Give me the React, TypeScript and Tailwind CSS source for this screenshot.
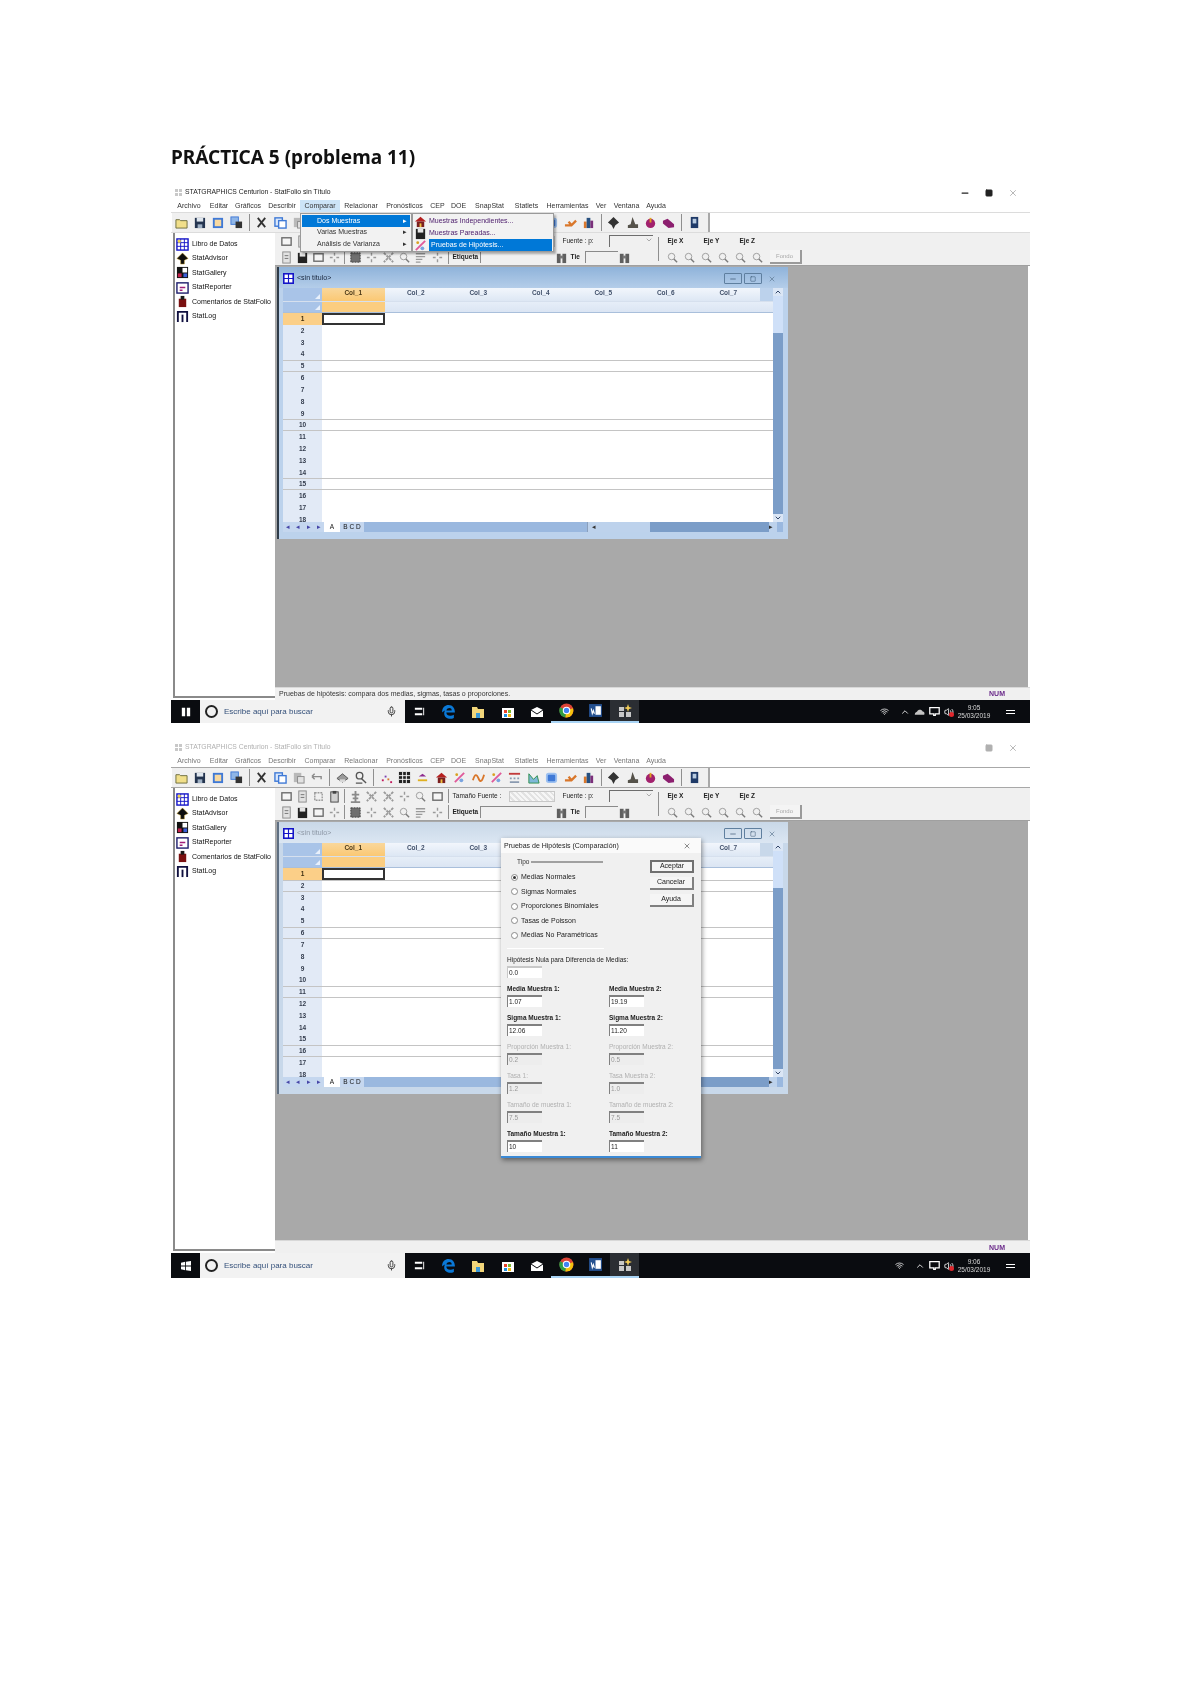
import { ChevronDown, ChevronUp, Mic, Minus, Square, Volume2, Wifi, X } from "lucide-react";
import type { ReactNode } from "react";

const menus = [
  { label: "Archivo", width: "w-[34px]" },
  { label: "Editar", width: "w-[26px]" },
  { label: "Gráficos", width: "w-[32px]" },
  { label: "Describir", width: "w-[36px]" },
  { label: "Comparar", width: "w-[40px]" },
  { label: "Relacionar", width: "w-[42px]" },
  { label: "Pronósticos", width: "w-[45px]" },
  { label: "CEP", width: "w-[21px]" },
  { label: "DOE", width: "w-[21px]" },
  { label: "SnapStat", width: "w-[41px]" },
  { label: "Statlets", width: "w-[33px]" },
  { label: "Herramientas", width: "w-[49px]" },
  { label: "Ver", width: "w-[18px]" },
  { label: "Ventana", width: "w-[33px]" },
  { label: "Ayuda", width: "w-[26px]" },
];

const sidebarItems = [
  { label: "Libro de Datos", icon: "book" },
  { label: "StatAdvisor", icon: "advisor" },
  { label: "StatGallery", icon: "gallery" },
  { label: "StatReporter", icon: "reporter" },
  { label: "Comentarios de StatFolio", icon: "comments" },
  { label: "StatLog", icon: "log" },
];

function ToolIcon({ kind }: { kind: string }) {
  const shapes: Record<string, ReactNode> = {
    folder: <path d="M1 4h4l1 1h7v8H1z" fill="#f1df8a" stroke="#6b6b3a" />,
    save: (
      <>
        <rect x="2" y="2" width="11" height="11" fill="#24344f" />
        <rect x="4" y="2" width="7" height="4" fill="#dfe6ee" />
        <rect x="5" y="9" width="5" height="4" fill="#9fb0c4" />
      </>
    ),
    frame: <rect x="3" y="3" width="9" height="9" fill="#f8d9a0" stroke="#3f79d6" strokeWidth="2" />,
    multi: (
      <>
        <rect x="1" y="1" width="8" height="8" fill="#8fb6e8" stroke="#3f79d6" />
        <rect x="6" y="6" width="7" height="7" fill="#333333" />
      </>
    ),
    cut: <path d="M3 2l8 10M11 2L3 12" stroke="#333333" strokeWidth="2" fill="none" />,
    copy: (
      <>
        <rect x="1" y="2" width="8" height="9" fill="#dbe8fb" stroke="#3f79d6" strokeWidth="1.5" />
        <rect x="5" y="5" width="8" height="8" fill="#ffffff" stroke="#3f79d6" strokeWidth="1.5" />
      </>
    ),
    paste: (
      <>
        <rect x="2" y="2" width="8" height="10" fill="#b9b9b9" />
        <rect x="6" y="6" width="7" height="7" fill="#e2e2e2" stroke="#8a8a8a" />
      </>
    ),
    undo: <path d="M2 6h10v3M2 6l3-3M2 6l3 3" stroke="#8a8a8a" strokeWidth="1.5" fill="none" />,
    print: (
      <>
        <path d="M1 8l6-5 6 5-6 4z" fill="#9a9a9a" stroke="#555555" />
        <rect x="4" y="9" width="6" height="3" fill="#d8d8d8" />
      </>
    ),
    preview: (
      <>
        <circle cx="6" cy="5" r="3.5" fill="none" stroke="#555555" strokeWidth="1.5" />
        <path d="M8 8l5 5M2 13h7" stroke="#555555" strokeWidth="1.5" />
      </>
    ),
    scatter: (
      <>
        <rect x="2" y="9" width="2" height="2" fill="#c2185b" />
        <rect x="5" y="5" width="2" height="2" fill="#7b3fb0" />
        <rect x="8" y="8" width="2" height="2" fill="#d9772b" />
        <rect x="11" y="11" width="2" height="2" fill="#c2185b" />
      </>
    ),
    grid: (
      <>
        <rect x="1" y="1" width="12" height="12" fill="#222222" />
        <path d="M5 1v12M9 1v12M1 5h12M1 9h12" stroke="#ffffff" />
      </>
    ),
    hat: (
      <>
        <path d="M3 6l4-3 4 3z" fill="#8e2a8e" />
        <rect x="2" y="9" width="10" height="2" fill="#e0b020" />
      </>
    ),
    house: (
      <>
        <path d="M7 2l6 5H1z" fill="#b52020" />
        <rect x="3" y="7" width="8" height="6" fill="#7a1f1f" />
        <rect x="6" y="9" width="2" height="4" fill="#f0c040" />
      </>
    ),
    wave: <path d="M1 10c2-7 4-7 6-2s4 3 6-4" stroke="#d9772b" strokeWidth="2" fill="none" />,
    mixed: (
      <>
        <path d="M2 12L12 2" stroke="#e05a9a" strokeWidth="2" />
        <circle cx="9" cy="10" r="2" fill="#7aa4e0" />
        <circle cx="4" cy="4" r="1.5" fill="#d9a020" />
      </>
    ),
    dash: (
      <>
        <path d="M1 3h12" stroke="#c23a3a" strokeWidth="2" />
        <path d="M2 8h2M6 8h2M10 8h2M2 12h10" stroke="#8a9ab0" strokeWidth="2" />
      </>
    ),
    chart: <path d="M2 13V3l5 6 4-4 2 8z" fill="#7fb8d8" stroke="#2f8f4e" />,
    blue: <rect x="2" y="3" width="10" height="9" rx="2" fill="#3f79d6" stroke="#9cc0f0" strokeWidth="2" />,
    arrow: <path d="M1 10h7l5-5M5 6l3 4" stroke="#d9772b" strokeWidth="2.5" fill="none" />,
    tower: (
      <>
        <rect x="2" y="6" width="3" height="7" fill="#d9772b" />
        <rect x="5" y="2" width="4" height="11" fill="#27507f" />
        <rect x="9" y="5" width="3" height="8" fill="#7a2f7a" />
      </>
    ),
    ball: <path d="M7 1l6 6-4 3-2 4-2-4-4-3z" fill="#333333" />,
    wizard: <path d="M7 1l3 8h3v4H2v-3l3-1z" fill="#55524a" />,
    apple: (
      <>
        <circle cx="7" cy="8" r="5" fill="#a2216d" />
        <path d="M7 2v5" stroke="#e0a020" strokeWidth="2" />
      </>
    ),
    bookmark: <path d="M1 5l5-2 7 6v3l-6 1-6-5z" fill="#8c1f6f" />,
    doc: (
      <>
        <rect x="3" y="1" width="8" height="12" fill="#1f3a68" />
        <rect x="5" y="3" width="4" height="5" fill="#b8cbe0" />
      </>
    ),
    grayFrame: <rect x="2" y="3" width="10" height="8" fill="#f5f5f5" stroke="#6d6d6d" strokeWidth="1.5" />,
    grayDoc: (
      <>
        <rect x="3" y="1" width="8" height="12" fill="#e2e2e2" stroke="#8a8a8a" />
        <path d="M5 5h4M5 8h4" stroke="#707070" />
      </>
    ),
    grayDots: <rect x="3" y="3" width="8" height="8" fill="none" stroke="#9a9a9a" strokeWidth="1.5" strokeDasharray="2 1" />,
    clip: (
      <>
        <rect x="3" y="2" width="8" height="11" fill="#d0d0d0" stroke="#444444" />
        <rect x="5" y="1" width="4" height="3" fill="#444444" />
      </>
    ),
    grayTree: <path d="M7 1v12M3 5h8M2 13h10M4 9h6" stroke="#8a8a8a" strokeWidth="2" />,
    graySpark: <path d="M2 7h3M9 7h3M7 2v3M7 9v3" stroke="#9a9a9a" strokeWidth="1.5" />,
    grayCross: <path d="M2 2l10 10M12 2L2 12" stroke="#9a9a9a" strokeWidth="2" strokeDasharray="3 1" />,
    floppyDark: (
      <>
        <rect x="2" y="2" width="10" height="11" fill="#222222" />
        <rect x="4" y="2" width="6" height="4" fill="#e5e5e5" />
      </>
    ),
    hatch: <rect x="2" y="2" width="10" height="10" fill="#6f6f6f" stroke="#3d3d3d" strokeDasharray="2 1" />,
    lines: <path d="M2 3h10M2 6h10M2 9h7M2 12h5" stroke="#9a9a9a" strokeWidth="1.5" />,
    zoomGray: (
      <>
        <circle cx="6" cy="6" r="3.5" fill="none" stroke="#9a9a9a" />
        <path d="M8.5 8.5L12 12" stroke="#7b7b7b" strokeWidth="1.5" />
      </>
    ),
    binoculars: (
      <>
        <rect x="2" y="3" width="4" height="10" fill="#5f5f5f" />
        <rect x="8" y="3" width="4" height="10" fill="#5f5f5f" />
        <rect x="5" y="5" width="4" height="3" fill="#777777" />
      </>
    ),
  };
  return (
    <svg viewBox="0 0 14 14" className="h-[13px] w-[13px] shrink-0">
      {shapes[kind]}
    </svg>
  );
}

function Separator({ height = "h-[17px]", margin = "mx-[3px]" }: { height?: string; margin?: string }) {
  return <div className={`${height} ${margin} w-px shrink-0 bg-[#8f8f8f]`} />;
}

function MainToolbar({ active }: { active: boolean }) {
  const first = ["folder", "save", "frame", "multi"];
  const second = ["cut", "copy", "paste", "undo"];
  const third = ["print", "preview"];
  const fourth = ["scatter", "grid", "hat", "house", "mixed", "wave", "mixed", "dash", "chart", "blue", "arrow", "tower"];
  const fifth = ["ball", "wizard", "apple", "bookmark"];
  const slot = (kind: string, index: number) => (
    <div className="flex w-[18.4px] shrink-0 justify-center" key={`${kind}-${index}`}>
      <ToolIcon kind={kind} />
    </div>
  );
  return (
    <div
      className={`flex h-[21px] items-center border-y bg-white pl-[1px] ${
        active ? "border-[#dcdcdc]" : "border-[#a8a8a8]"
      }`}
    >
      <div className="flex h-full items-center bg-[#f0f0f0] pr-[4px]">
        {first.map(slot)}
        <Separator />
        {second.map(slot)}
        <Separator />
        {third.map(slot)}
        <Separator />
        {fourth.map(slot)}
        <Separator />
        {fifth.map(slot)}
        <Separator />
        {slot("doc", 0)}
      </div>
      <div className="h-full w-[2px] bg-[#a8a8a8]" />
    </div>
  );
}

function FormatToolbar() {
  const rowA = ["grayFrame", "grayDoc", "grayDots", "clip"];
  const rowA2 = ["grayTree", "grayCross", "grayCross", "graySpark", "zoomGray", "grayFrame"];
  const rowB = ["grayDoc", "floppyDark", "grayFrame", "graySpark"];
  const rowB2 = ["hatch", "graySpark", "grayCross", "zoomGray", "lines", "graySpark"];
  const slot = (kind: string, index: number) => (
    <div className="flex w-[15.8px] shrink-0 justify-center" key={`${kind}-${index}`}>
      <ToolIcon kind={kind} />
    </div>
  );
  const wideSlot = (kind: string, index: number) => (
    <div className="flex w-[16.4px] shrink-0 justify-center" key={`${kind}-${index}`}>
      <ToolIcon kind={kind} />
    </div>
  );
  return (
    <div className="flex h-[33px] shrink-0 border-b border-[#a0a0a0] bg-[#f0f0f0] pl-[4px] text-[6.5px] text-[#222]">
      <div className="flex flex-col justify-center gap-[1px]">
        <div className="flex h-[15px] items-center">
          {rowA.map(slot)}
          <Separator height="h-[14px]" margin="mx-[2px]" />
          {rowA2.map(wideSlot)}
          <Separator height="h-[14px]" margin="mx-[2px]" />
          <span className="w-[58px] pl-[2px]">Tamaño Fuente :</span>
          <div className="h-[11px] w-[46px] border border-[#c8c8c8] bg-[repeating-linear-gradient(45deg,#f6f6f6_0_2px,#e2e2e2_2px_4px)]" />
          <span className="w-[54px] pl-[8px]">Fuente : p:</span>
          <div className="flex h-[12px] w-[44px] justify-end border-t border-l border-[#6e6e6e] bg-[#f0f0f0]">
            <ChevronDown size={8} className="text-[#888]" />
          </div>
        </div>
        <div className="flex h-[15px] items-center">
          {rowB.map(slot)}
          <Separator height="h-[14px]" margin="mx-[2px]" />
          {rowB2.map(wideSlot)}
          <Separator height="h-[14px]" margin="mx-[2px]" />
          <span className="w-[29px] pl-[2px] font-bold">Etiqueta</span>
          <div className="h-[12px] w-[72px] border-t border-l border-[#8a8a8a]" />
          <div className="flex w-[19px] justify-center">
            <ToolIcon kind="binoculars" />
          </div>
          <span className="w-[14px] font-bold">Tie</span>
          <div className="h-[12px] w-[33px] border-t border-l border-[#8a8a8a]" />
          <div className="flex w-[14px] justify-center">
            <ToolIcon kind="binoculars" />
          </div>
        </div>
      </div>
      <div className="mx-[5px] my-[4px] w-px bg-[#8f8f8f]" />
      <div className="flex flex-col justify-center gap-[1px]">
        <div className="flex h-[15px] items-center font-bold">
          <span className="w-[36px] pl-[4px]">Eje X</span>
          <span className="w-[36px] pl-[4px]">Eje Y</span>
          <span className="w-[30px] pl-[4px]">Eje Z</span>
        </div>
        <div className="flex h-[15px] items-center">
          {["zoomGray", "zoomGray", "zoomGray", "zoomGray", "zoomGray", "zoomGray"].map((kind, index) => (
            <div className="flex w-[17px] justify-center" key={index}>
              <ToolIcon kind={kind} />
            </div>
          ))}
          <div className="ml-[4px] flex h-[14px] w-[32px] items-center justify-center border-r-2 border-b-2 border-[#9a9a9a] bg-[#f4f4f4] text-[6px] text-[#aaa]">
            Fondo
          </div>
        </div>
      </div>
    </div>
  );
}

function SidebarIcon({ kind }: { kind: string }) {
  const shapes: Record<string, ReactNode> = {
    book: (
      <>
        <rect x="1" y="1" width="12" height="12" fill="#ffffff" stroke="#1414c8" strokeWidth="1.5" />
        <path d="M1 5h12M1 9h12M5 1v12M9 1v12" stroke="#1414c8" />
        <rect x="2" y="2" width="3" height="3" fill="#f2d64b" />
      </>
    ),
    advisor: <path d="M7 1l6 6-4 2v4H5V9L1 7z" fill="#0d0d0d" stroke="#c9a020" strokeWidth="0.5" />,
    gallery: (
      <>
        <rect x="1" y="1" width="12" height="12" fill="#111111" />
        <rect x="7" y="2" width="5" height="5" fill="#ffffff" />
        <rect x="2" y="8" width="4" height="4" fill="#c21f4a" />
        <rect x="8" y="8" width="4" height="4" fill="#3b5fd8" />
      </>
    ),
    reporter: (
      <>
        <rect x="1" y="2" width="12" height="11" fill="#ffffff" stroke="#1d1d6d" strokeWidth="1.5" />
        <path d="M4 7h6M4 10h3" stroke="#a01f7a" strokeWidth="1.5" />
      </>
    ),
    comments: (
      <>
        <rect x="3" y="4" width="8" height="9" fill="#7a1010" />
        <rect x="5" y="1" width="4" height="4" fill="#1a1a1a" />
      </>
    ),
    log: (
      <>
        <path d="M2 13V2h10v11" fill="none" stroke="#101040" strokeWidth="2" />
        <rect x="6" y="5" width="2" height="8" fill="#101040" />
      </>
    ),
  };
  return (
    <svg viewBox="0 0 14 14" className="h-[13px] w-[13px] shrink-0">
      {shapes[kind]}
    </svg>
  );
}

function Sidebar() {
  return (
    <div className="flex h-full w-[102px] shrink-0 flex-col border-b-2 border-l-2 border-[#8a8a8a] bg-white pt-[4px] pl-[1px]">
      {sidebarItems.map((item) => (
        <div className="flex h-[14.4px] items-center gap-[3px] text-[7px] text-[#111]" key={item.label}>
          <SidebarIcon kind={item.icon} />
          <span className="whitespace-nowrap">{item.label}</span>
        </div>
      ))}
    </div>
  );
}

function CornerCell() {
  return (
    <div className="flex w-[39px] shrink-0 items-end justify-end bg-[#a9c4e8] pr-[2px] pb-[2px]">
      <div className="h-0 w-0 border-b-[5px] border-l-[5px] border-b-[#e8f0fb] border-l-transparent" />
    </div>
  );
}

function DataWindow({ active, linedRows }: { active: boolean; linedRows: number[] }) {
  // the dialog covers Col_4 and Col_5 in the second capture
  const columns = active
    ? ["Col_1", "Col_2", "Col_3", "Col_4", "Col_5", "Col_6", "Col_7"]
    : ["Col_1", "Col_2", "Col_3", "", "", "", "Col_7"];
  const rows = Array.from({ length: 18 }, (_, i) => i + 1);
  return (
    <div
      className={`flex h-[272px] w-[511px] flex-col border-l-2 ${
        active ? "border-[#2e3b48] bg-[#bcd2ec]" : "border-[#5f6f82] bg-[#c8d8ea]"
      }`}
    >
      <div
        className={`flex h-[21px] shrink-0 items-center gap-[2px] pt-[2px] pl-[4px] text-[7px] ${
          active
            ? "bg-gradient-to-b from-[#8fb3da] to-[#b4cde9] text-[#16233a]"
            : "bg-gradient-to-b from-[#c9d8e8] to-[#dbe6f2] text-[#8d97a5]"
        }`}
      >
        <svg viewBox="0 0 14 14" className="h-[11px] w-[11px]">
          <rect x="1" y="1" width="12" height="12" fill="#ffffff" stroke="#1414c8" strokeWidth="2" />
          <path d="M1 7h12M7 1v12" stroke="#1414c8" strokeWidth="1.5" />
        </svg>
        <span className="ml-[1px]">&lt;sin título&gt;</span>
        <div className="mr-[8px] ml-auto flex items-center gap-[2px]">
          <div className="flex h-[11px] w-[18px] items-center justify-center rounded-[1px] border border-[#5f7f9f] text-[#35506d]">
            <Minus size={8} />
          </div>
          <div className="flex h-[11px] w-[18px] items-center justify-center rounded-[1px] border border-[#5f7f9f] text-[#35506d]">
            <Square size={6} />
          </div>
          <div className="flex h-[11px] w-[16px] items-center justify-center text-[#5b7590]">
            <X size={8} />
          </div>
        </div>
      </div>
      <div className="flex min-h-0 flex-1 flex-col pr-[5px] pl-[4px]">
        <div className="flex min-h-0 flex-1">
          <div className="flex min-w-0 flex-1 flex-col">
            <div className="flex h-[13px] shrink-0">
              <CornerCell />
              {columns.map((col, index) => (
                <div
                  className={`flex w-[62.5px] items-center justify-center pb-[3px] text-[6.5px] font-bold ${
                    index === 0
                      ? "bg-gradient-to-b from-[#f9d79b] to-[#fbc873] text-[#4d3a18]"
                      : "bg-gradient-to-b from-[#f2f6fc] to-[#dde7f4] text-[#41506a]"
                  }`}
                  key={index}
                >
                  {col}
                </div>
              ))}
            </div>
            <div className="flex h-[12px] shrink-0 border-t border-b border-t-[#d6e0ee] border-b-[#a9bfdb]">
              <CornerCell />
              <div className="w-[62.5px] bg-[#fbcd80]" />
              <div className="flex-1 bg-gradient-to-b from-[#e6eef8] to-[#dbe5f3]" />
            </div>
            <div className="min-h-0 flex-1 overflow-hidden bg-white">
              {rows.map((row) => (
                <div
                  className={`flex h-[11.82px] ${linedRows.includes(row) ? "border-y border-[#c4c4c4]" : ""}`}
                  key={row}
                >
                  <div
                    className={`flex w-[39px] shrink-0 items-center justify-center text-[6.5px] font-bold ${
                      row === 1 ? "bg-[#fbcf88] text-[#3d2f12]" : "bg-[#e2eaf6] text-[#333c4d]"
                    }`}
                  >
                    {row}
                  </div>
                  <div className={`w-[62.5px] shrink-0 ${row === 1 ? "border-2 border-[#333333] bg-white" : ""}`} />
                </div>
              ))}
            </div>
          </div>
          <div className="flex w-[10px] shrink-0 flex-col bg-[#7b9dc8]">
            <div className="flex h-[8px] items-center justify-center bg-[#dbe6f5] text-[#34486a]">
              <ChevronUp size={8} strokeWidth={3} />
            </div>
            <div className="h-[37px] bg-[#cfe0f8]" />
            <div className="flex-1" />
            <div className="flex h-[8px] items-center justify-center bg-[#dbe6f5] text-[#34486a]">
              <ChevronDown size={8} strokeWidth={3} />
            </div>
          </div>
        </div>
        <div className="flex h-[10px] shrink-0 items-center bg-[#9ab8df] pr-[6px] text-[6.5px] text-[#4646a8]">
          <div className="flex w-[41px] justify-around bg-[#c5d7ef]">
            <span>◂</span>
            <span>◂</span>
            <span>▸</span>
            <span>▸</span>
          </div>
          <div className="flex w-[16px] justify-center bg-white text-[#111]">A</div>
          <div className="flex w-[24px] justify-center bg-[#c5d7ef] text-[#111]">B C D</div>
          <div className="ml-auto flex h-full w-[190px] items-center border-l border-[#8ba0bd]">
            <div className="flex h-full w-[62px] items-center bg-[#bdd2ec] pl-[4px] text-[#333]">◂</div>
            <div className="h-full flex-1 bg-[#7b9dc8]" />
            <div className="h-full w-[8px] bg-[#bdd2ec] text-[#333]">▸</div>
          </div>
        </div>
      </div>
      <div className="h-[7px] shrink-0" />
    </div>
  );
}

function ComparePopup() {
  return (
    <div className="absolute top-[28px] left-[129px] flex h-[39px] text-[7px] shadow-[2px_2px_2px_rgba(0,0,0,0.3)]">
      <div className="flex w-[112px] flex-col border border-[#9a9a9a] bg-[#f2f2f2] p-[1px]">
        <div className="flex h-[12px] items-center bg-[#0078d7] pr-[3px] pl-[15px] text-white">
          Dos Muestras<span className="ml-auto">▸</span>
        </div>
        <div className="flex h-[12px] items-center pr-[3px] pl-[15px] text-[#333]">
          Varias Muestras<span className="ml-auto">▸</span>
        </div>
        <div className="flex h-[12px] items-center pr-[3px] pl-[15px] text-[#333]">
          Análisis de Varianza<span className="ml-auto">▸</span>
        </div>
      </div>
      <div className="flex w-[142px] flex-col border border-[#9a9a9a] bg-[#f2f2f2] p-[1px]">
        <div className="flex h-[12px] items-center gap-[2px] text-[#4a1a6a]">
          <ToolIcon kind="house" />
          Muestras Independientes...
        </div>
        <div className="flex h-[12px] items-center gap-[2px] text-[#4a1a6a]">
          <ToolIcon kind="floppyDark" />
          Muestras Pareadas...
        </div>
        <div className="flex h-[12px] items-center gap-[2px] text-white">
          <ToolIcon kind="mixed" />
          <div className="flex h-full flex-1 items-center bg-[#0078d7] pl-[2px]">Pruebas de Hipótesis...</div>
        </div>
      </div>
    </div>
  );
}

function Field({ label, value, enabled }: { label: string; value: string; enabled: boolean }) {
  return (
    <div className="flex h-[29px] flex-col">
      <span
        className={`h-[13px] whitespace-nowrap pt-[2px] text-[6.5px] ${
          enabled ? "font-bold text-[#222]" : "text-[#b0b0b0]"
        }`}
      >
        {label}
      </span>
      <div
        className={`flex h-[12px] w-[35px] items-center border-t-2 border-l border-[#808080] pl-[1px] text-[6.5px] ${
          enabled ? "bg-white text-[#222]" : "bg-[#ededed] text-[#999]"
        }`}
      >
        {value}
      </div>
    </div>
  );
}

function HypothesisDialog() {
  const options = ["Medias Normales", "Sigmas Normales", "Proporciones Binomiales", "Tasas de Poisson", "Medias No Paramétricas"];
  const fields = [
    { left: "Media Muestra 1:", leftValue: "1.07", right: "Media Muestra 2:", rightValue: "19.19", enabled: true },
    { left: "Sigma Muestra 1:", leftValue: "12.06", right: "Sigma Muestra 2:", rightValue: "11.20", enabled: true },
    { left: "Proporción Muestra 1:", leftValue: "0.2", right: "Proporción Muestra 2:", rightValue: "0.5", enabled: false },
    { left: "Tasa 1:", leftValue: "1.2", right: "Tasa Muestra 2:", rightValue: "1.0", enabled: false },
    { left: "Tamaño de muestra 1:", leftValue: "7.5", right: "Tamaño de muestra 2:", rightValue: "7.5", enabled: false },
    { left: "Tamaño Muestra 1:", leftValue: "10", right: "Tamaño Muestra 2:", rightValue: "11", enabled: true },
  ];
  return (
    <div className="absolute top-[98px] left-[330px] h-[320px] w-[200px] border-b-2 border-[#3b8ad6] bg-[#f0f0f0] shadow-[1px_2px_5px_rgba(0,0,0,0.45)]">
      <div className="flex h-[15px] items-center justify-between bg-[#fafafa] pt-[1px] pr-[10px] pl-[3px] text-[7px] text-[#222]">
        <span>Pruebas de Hipótesis (Comparación)</span>
        <X size={8} className="text-[#555]" />
      </div>
      <div className="flex flex-col px-[6px]">
        <div className="flex justify-between">
          <div className="flex flex-col">
            <div className="flex h-[17px] items-center gap-[2px]">
              <span className="pl-[10px] text-[6.5px] text-[#333]">Tipo</span>
              <div className="h-[2px] w-[72px] bg-[#a0a0a0]" />
            </div>
            <div className="flex flex-col pl-[4px]">
              {options.map((option, index) => (
                <div className="flex h-[14.5px] items-center gap-[3px] text-[7px] text-[#222]" key={option}>
                  <div className="flex h-[7px] w-[7px] items-center justify-center rounded-full border border-[#8a8a8a] bg-white">
                    {index === 0 ? <div className="h-[3px] w-[3px] rounded-full bg-[#333]" /> : null}
                  </div>
                  {option}
                </div>
              ))}
            </div>
          </div>
          <div className="flex flex-col gap-[4px] pt-[7px] pr-[1px] text-[7px] text-[#222]">
            <div className="flex h-[13px] w-[44px] items-center justify-center border-2 border-[#707070] bg-[#f5f5f5]">
              Aceptar
            </div>
            <div className="flex h-[13px] w-[44px] items-center justify-center border-r-2 border-b-2 border-[#808080] bg-[#f5f5f5]">
              Cancelar
            </div>
            <div className="flex h-[13px] w-[44px] items-center justify-center border-r-2 border-b-2 border-[#808080] bg-[#f5f5f5]">
              Ayuda
            </div>
          </div>
        </div>
        <div className="mt-[5px] mb-[6px] h-[1px] w-[97px] bg-white" />
        <span className="h-[11px] text-[6.5px] text-[#222]">Hipótesis Nula para Diferencia de Medias:</span>
        <div className="flex h-[12px] w-[35px] items-center border-t-2 border-l border-[#c8c8c8] bg-white pl-[1px] text-[6.5px] text-[#222]">
          0.0
        </div>
        <div className="mt-[4px] grid grid-cols-[102px_1fr]">
          {fields.map((field) => [
            <Field key={field.left} label={field.left} value={field.leftValue} enabled={field.enabled} />,
            <Field key={field.right} label={field.right} value={field.rightValue} enabled={field.enabled} />,
          ])}
        </div>
      </div>
    </div>
  );
}

function Taskbar({ windowsLogo, time, height, trayCloud }: { windowsLogo: boolean; time: string; height: string; trayCloud: boolean }) {
  const apps = ["task", "edge", "folder", "store", "mail", "chrome", "word", "stat"];
  const appIcon = (app: string) => {
    switch (app) {
      case "task":
        return (
          <svg viewBox="0 0 14 14" className="h-[13px] w-[13px]">
            <path d="M2 3h8v2H2zM2 9h8v2H2zM11 3h1v8h-1z" fill="#ffffff" />
          </svg>
        );
      case "edge":
        return (
          <svg viewBox="0 0 14 14" className="h-[15px] w-[15px]">
            <path d="M1 8C1 3 4 1 7 1c4 0 6 3 6 7H5c0 3 4 4 7 2v3c-4 2-9 0-9-4 0-1 0-2 1-3-1 0-2 1-3 2zM5 6h5c0-3-4-3-5 0z" fill="#0a78d6" />
          </svg>
        );
      case "folder":
        return (
          <svg viewBox="0 0 14 14" className="h-[14px] w-[14px]">
            <path d="M1 2h5l1 2h6v9H1z" fill="#f2d67a" />
            <rect x="5" y="8" width="4" height="5" fill="#3a9ad9" />
          </svg>
        );
      case "store":
        return (
          <svg viewBox="0 0 14 14" className="h-[14px] w-[14px]">
            <rect x="1" y="3" width="12" height="10" fill="#ffffff" />
            <rect x="3" y="5" width="3" height="3" fill="#e8452c" />
            <rect x="7" y="5" width="3" height="3" fill="#7bb82e" />
            <rect x="3" y="9" width="3" height="3" fill="#1e90e0" />
            <rect x="7" y="9" width="3" height="3" fill="#f2b90f" />
          </svg>
        );
      case "mail":
        return (
          <svg viewBox="0 0 14 14" className="h-[14px] w-[14px]">
            <path d="M1 5l6-3 6 3v7H1z" fill="#ffffff" />
            <path d="M1 5l6 4 6-4" stroke="#0a0c10" fill="none" />
          </svg>
        );
      case "chrome":
        return (
          <svg viewBox="0 0 14 14" className="h-[15px] w-[15px]">
            <circle cx="7" cy="7" r="6.5" fill="#dc4437" />
            <path d="M7 7L1 4a6.5 6.5 0 0 0 5 9.5z" fill="#2f9e44" />
            <path d="M7 7l6-2a6.5 6.5 0 0 1-7 8.5z" fill="#f4c20d" />
            <circle cx="7" cy="7" r="3" fill="#4285f4" stroke="#ffffff" />
          </svg>
        );
      case "word":
        return (
          <svg viewBox="0 0 14 14" className="h-[15px] w-[15px]">
            <rect x="1" y="1" width="12" height="12" fill="#24508f" />
            <rect x="7" y="3" width="5" height="8" fill="#ffffff" />
            <path d="M3 5l1 5 1-3 1 3" stroke="#ffffff" fill="none" />
          </svg>
        );
      default:
        return (
          <svg viewBox="0 0 14 14" className="h-[14px] w-[14px]">
            <rect x="1" y="3" width="5" height="4" fill="#c8c8c8" />
            <rect x="1" y="8" width="5" height="5" fill="#c8c8c8" />
            <rect x="8" y="8" width="5" height="5" fill="#c8c8c8" />
            <path d="M10 0l1 3 3 1-3 1-1 3-1-3-3-1 3-1z" fill="#f3cd57" />
          </svg>
        );
    }
  };
  return (
    <div className={`flex ${height} shrink-0 bg-[#0a0c10]`}>
      <div className="flex w-[29px] items-center justify-center text-white">
        {windowsLogo ? (
          <svg viewBox="0 0 12 12" className="h-[10px] w-[10px]">
            <path d="M0 2l5-1v4.5H0zM6 1l6-1v5.5H6zM0 6.5h5V11L0 10zM6 6.5h6V12l-6-1z" fill="#ffffff" />
          </svg>
        ) : (
          <svg viewBox="0 0 12 12" className="h-[10px] w-[10px]">
            <path d="M1 1h4v10H1zM7 1h4v10H7z" fill="#ffffff" />
          </svg>
        )}
      </div>
      <div className="flex w-[205px] items-center bg-[#f2f2f2] pr-[8px] pl-[5px]">
        <div className="h-[13px] w-[13px] rounded-full border-2 border-[#222]" />
        <span className="ml-[6px] text-[8px] text-[#34507a]">Escribe aquí para buscar</span>
        <Mic size={11} className="ml-auto text-[#333]" />
      </div>
      <div className="flex flex-1 items-center">
        {apps.map((app) => (
          <div
            className={`flex h-full w-[29.3px] items-center justify-center ${
              app === "stat" ? "border-b-2 border-[#a9d4f5] bg-[#2b2e33]" : ""
            } ${app === "chrome" || app === "word" ? "border-b-2 border-[#a9d4f5]" : ""}`}
            key={app}
          >
            {appIcon(app)}
          </div>
        ))}
        <div className="ml-auto flex items-center gap-[4px] text-white">
          <Wifi size={9} />
          <ChevronUp size={10} className="ml-[7px]" />
          {trayCloud ? (
            <svg viewBox="0 0 14 14" className="h-[11px] w-[11px]">
              <path d="M1 11c0-3 2-3 3-4 1-3 6-3 7 0 2 0 3 2 2 4z" fill="#c4c4c4" />
            </svg>
          ) : null}
          <svg viewBox="0 0 14 14" className="h-[11px] w-[11px]">
            <path d="M1 2h12v8H8v2H6v-2H1z" fill="none" stroke="#ffffff" strokeWidth="1.6" />
          </svg>
          <div className="relative">
            <Volume2 size={10} />
            <div className="absolute top-[5px] left-[5px] h-[5px] w-[5px] rounded-full bg-[#e0282e]" />
          </div>
          <div className="ml-[-4px] flex w-[40px] flex-col items-center text-[6.5px] leading-[8px] text-[#d8d8d8]">
            <span>{time}</span>
            <span>25/03/2019</span>
          </div>
          <div className="mr-[15px] ml-[8px] flex w-[9px] flex-col gap-[2px]">
            <div className="h-[1px] bg-white" />
            <div className="h-[1px] bg-white" />
          </div>
        </div>
      </div>
    </div>
  );
}

function StatShot({ variant }: { variant: "menu" | "dialog" }) {
  const active = variant === "menu";
  return (
    <div className="relative flex h-[538px] w-[859px] flex-col font-['Liberation_Sans',sans-serif]">
      <div
        className={`flex h-[15px] shrink-0 items-center pr-[12px] pl-[4px] text-[6.8px] ${
          active ? "text-[#222]" : "text-[#b0b0b0]"
        }`}
      >
        <div className="mr-[3px] grid h-[7px] w-[7px] grid-cols-2 gap-[1px]">
          <div className="bg-[#c8c8c8]" />
          <div className="bg-[#c8c8c8]" />
          <div className="bg-[#c8c8c8]" />
          <div className="bg-[#c8c8c8]" />
        </div>
        STATGRAPHICS Centurion - StatFolio sin Título
        <div className={`ml-auto flex items-center gap-[15px] ${active ? "text-[#222]" : "text-[#b0b0b0]"}`}>
          {active ? <Minus size={10} strokeWidth={3} /> : <div className="w-[10px]" />}
          <Square size={8} strokeWidth={3} className={active ? "fill-[#222]" : "fill-[#b0b0b0]"} />
          <X size={10} className="text-[#aaa]" />
        </div>
      </div>
      <div className={`flex h-[12px] shrink-0 items-center pl-[1px] text-[7px] ${active ? "text-[#333]" : "text-[#777]"}`}>
        {menus.map((menu) => (
          <div
            className={`flex h-full ${menu.width} shrink-0 items-center justify-center ${
              active && menu.label === "Comparar" ? "bg-[#cce4f7]" : ""
            }`}
            key={menu.label}
          >
            {menu.label}
          </div>
        ))}
      </div>
      <MainToolbar active={active} />
      <div className="flex min-h-0 flex-1 pl-[2px]">
        <div className={active ? "h-[465px]" : "h-[463px]"}>
          <Sidebar />
        </div>
        <div className="flex min-w-0 flex-1 flex-col">
          <FormatToolbar />
          <div className="mr-[2px] min-h-0 flex-1 border-l border-[#a8a8a8] bg-[#a9a9a9] pt-[1px] pl-[1px]">
            <DataWindow active={active} linedRows={active ? [5, 10, 15] : [2, 6, 11, 16]} />
          </div>
          <div className="flex h-[13px] shrink-0 items-center border-t border-[#d8d8d8] bg-[#f0f0f0] pl-[4px] text-[7px] text-[#333]">
            {active ? "Pruebas de hipótesis: compara dos medias, sigmas, tasas o proporciones." : ""}
            <span className={`mr-[25px] ml-auto text-[7px] font-bold text-[#6a2a8a] ${active ? "" : "pt-[3px]"}`}>NUM</span>
          </div>
        </div>
      </div>
      <Taskbar
        windowsLogo={!active}
        time={active ? "9:05" : "9:06"}
        height={active ? "h-[23px]" : "h-[25px]"}
        trayCloud={active}
      />
      {active ? <ComparePopup /> : <HypothesisDialog />}
    </div>
  );
}

export default function App() {
  return (
    <main className="min-h-[1698px] w-[1200px] bg-white pt-[145px] pl-[171px] blur-[0.45px]">
      <h1 className="h-[40px] font-['Noto_Sans',sans-serif] text-[19px] leading-[24px] font-bold text-[#111]">
        PRÁCTICA 5 (problema 11)
      </h1>
      <div className="flex flex-col gap-[17px]">
        <StatShot variant="menu" />
        <StatShot variant="dialog" />
      </div>
    </main>
  );
}
